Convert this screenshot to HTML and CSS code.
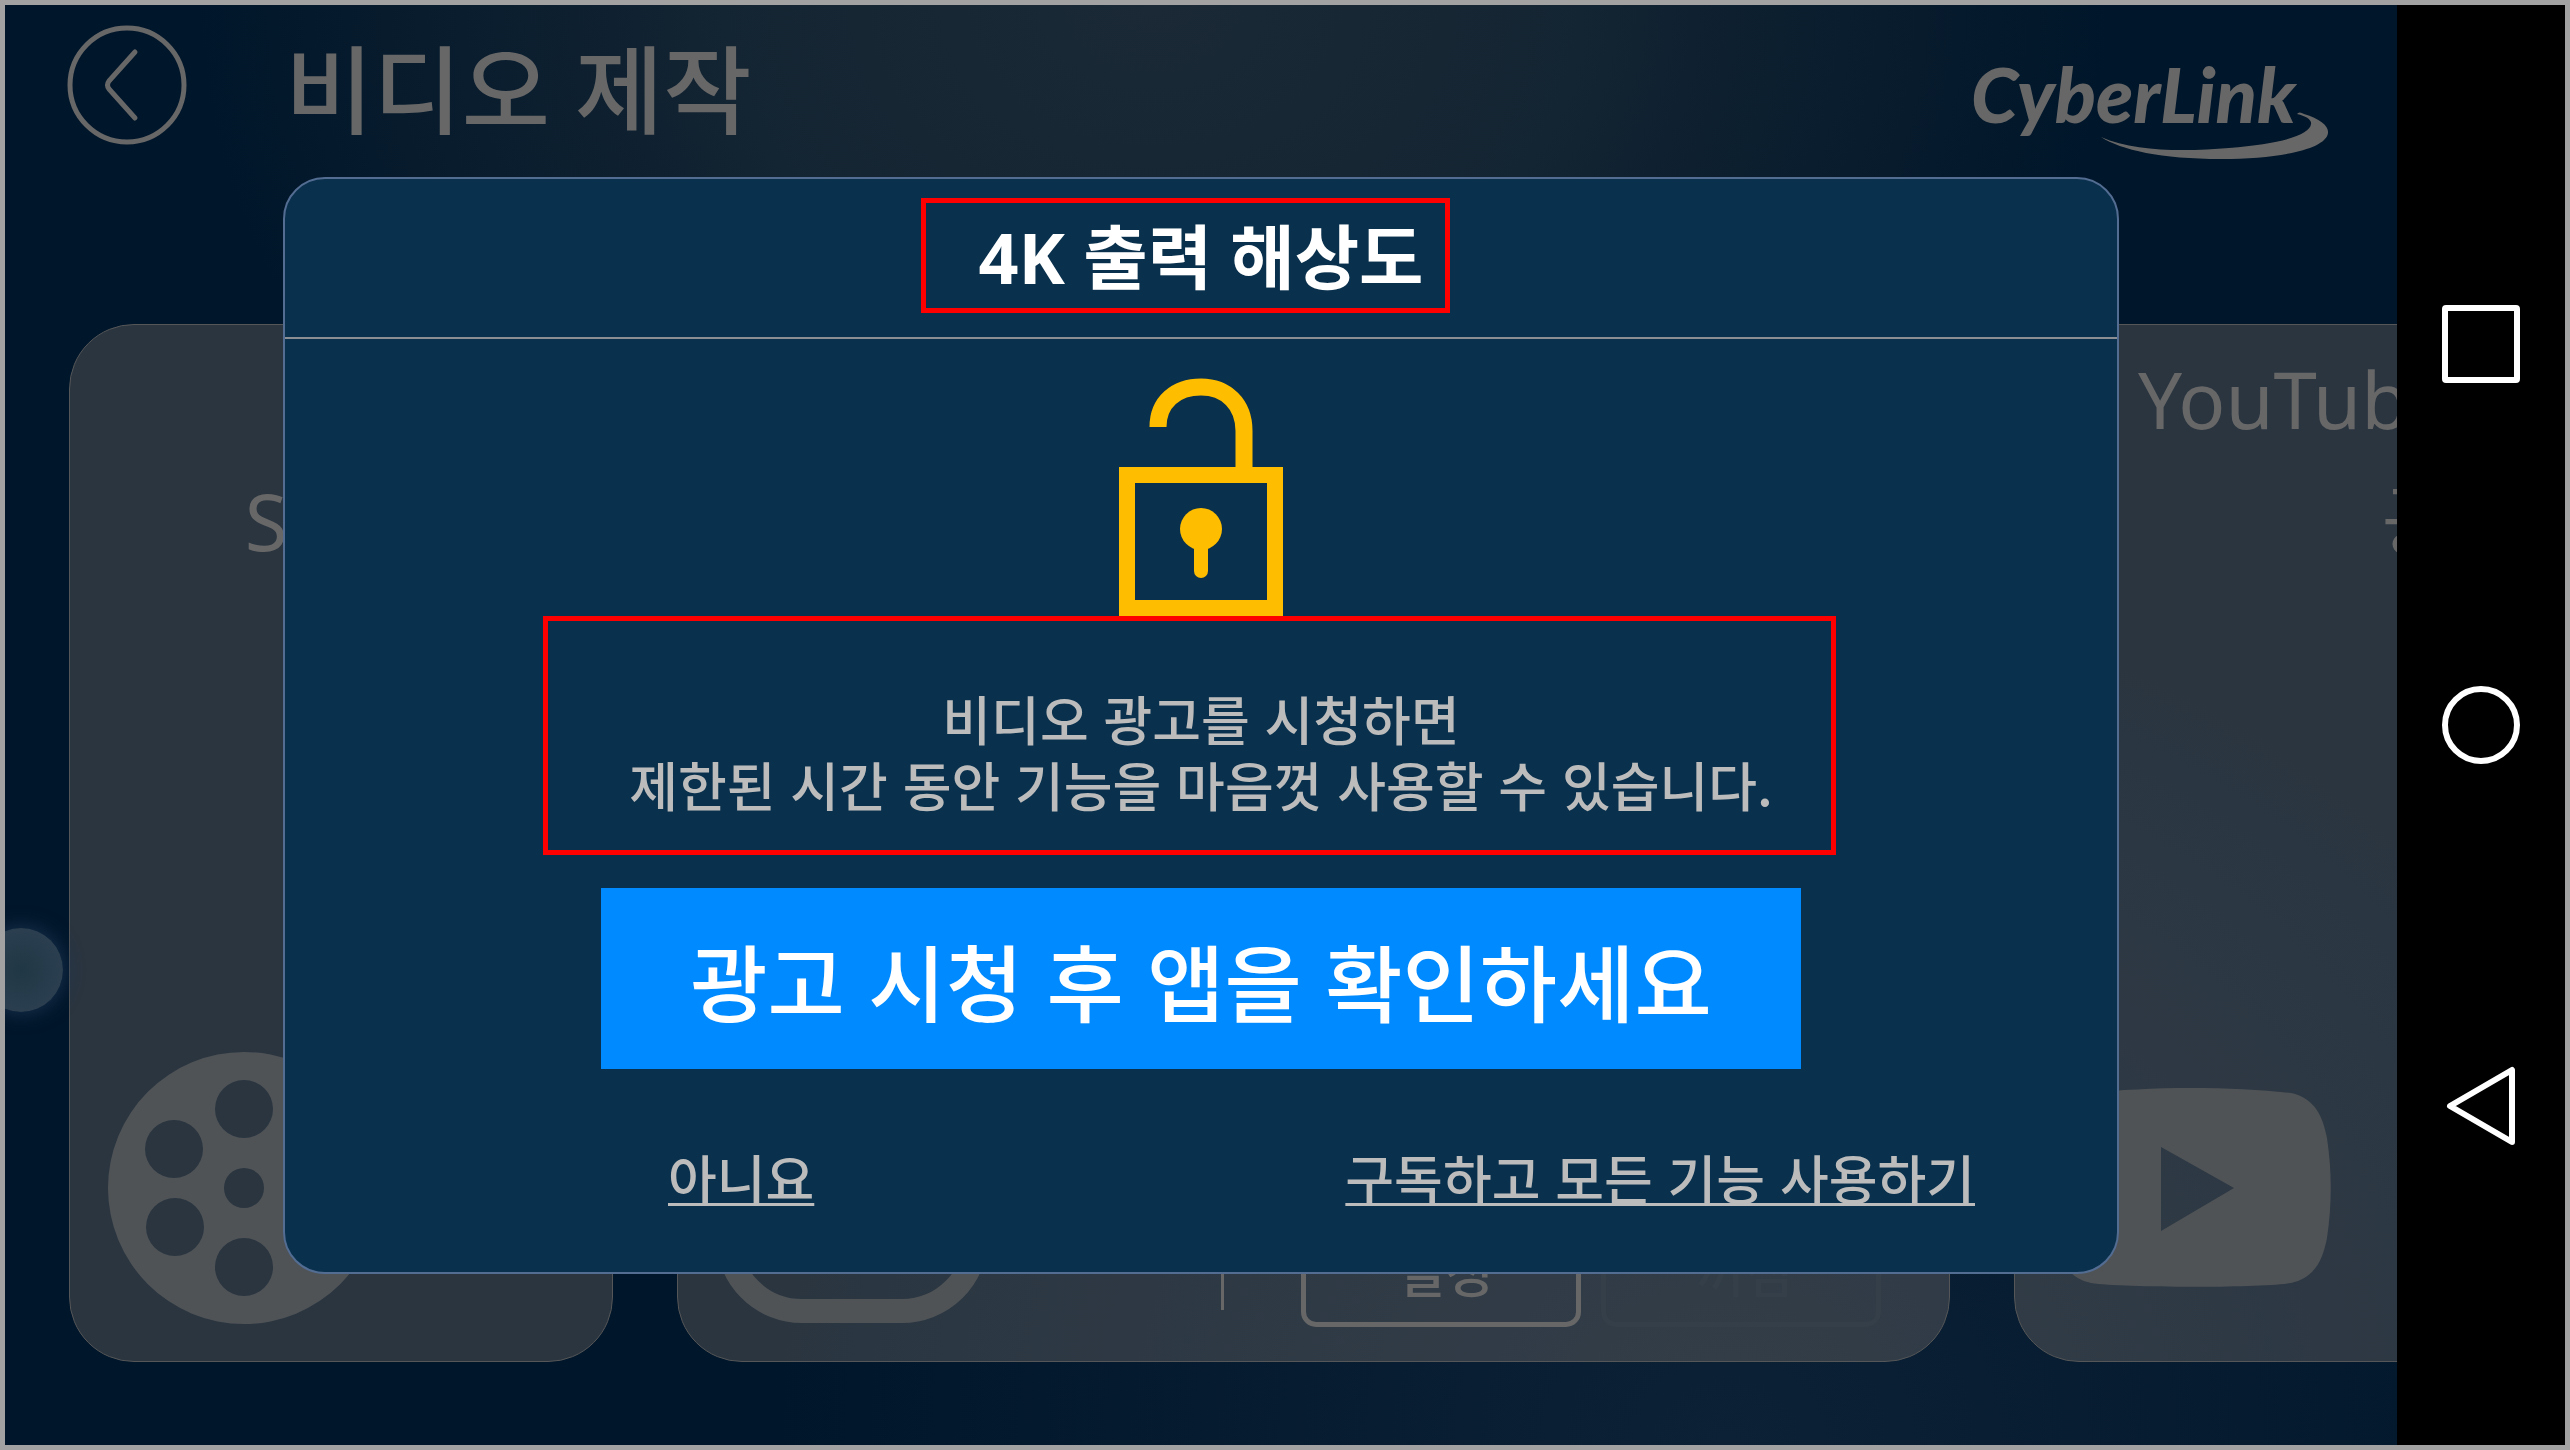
FILE: index.html
```html
<!DOCTYPE html>
<html lang="ko">
<head>
<meta charset="utf-8">
<meta name="viewport" content="width=device-width, initial-scale=1">
<title>비디오 제작</title>
<link rel="stylesheet" href="styles.css">
</head>
<body>
<div class="device">
  <main class="app">
    <header class="topbar">
      <button class="back" type="button" aria-label="뒤로">
        <svg viewBox="0 0 120 120" width="120" height="120" fill="none" stroke="currentColor" stroke-linecap="round" stroke-linejoin="round">
          <circle cx="60" cy="60" r="57" stroke-width="5"/>
          <path d="M68 27 42 56q-3 4 0 8l26 29" stroke-width="5"/>
        </svg>
      </button>
      <h1 class="page-title">비디오 제작</h1>
      <svg class="logo" viewBox="0 0 360 120" width="360" height="120" role="img" aria-label="CyberLink">
        <text class="logo-text" x="0" y="78">CyberLink</text>
        <path d="M130 92C165 108 220 106 258 103C310 99 339 90 340 79C341 75 335 71 326 69Q328 66 333 69C349 74 358 81 357 88C355 104 310 114 250 114C190 114 150 105 130 92Z" fill="currentColor"/>
      </svg>
    </header>

    <section class="cards">
      <article class="card">
        <h2 class="card-title">저장<br>SD 카드에</h2>
        <svg class="card-icon" viewBox="0 0 272 272" width="272" height="272">
          <path fill="currentColor" fill-rule="evenodd" d="M136 0a136 136 0 1 1 0 272a136 136 0 1 1 0-272ZM136 28a29 29 0 1 0 0 58a29 29 0 1 0 0-58ZM66 68a29 29 0 1 0 0 58a29 29 0 1 0 0-58ZM206 68a29 29 0 1 0 0 58a29 29 0 1 0 0-58ZM67 146a29 29 0 1 0 0 58a29 29 0 1 0 0-58ZM205 146a29 29 0 1 0 0 58a29 29 0 1 0 0-58ZM136 186a29 29 0 1 0 0 58a29 29 0 1 0 0-58ZM136 116a20 20 0 1 0 0 40a20 20 0 1 0 0-40Z"/>
        </svg>
      </article>
      <article class="card card-wide">
        <svg class="card-icon" viewBox="0 0 272 272" width="272" height="272">
          <rect x="12" y="12" width="248" height="248" rx="74" fill="none" stroke="currentColor" stroke-width="24"/>
        </svg>
        <div class="actions">
          <button class="option" type="button">설정</button>
          <button class="option option-off" type="button" disabled>꺼짐</button>
        </div>
      </article>
      <article class="card">
        <h2 class="card-title">YouTube에<br>공유</h2>
        <svg class="card-icon" viewBox="0 0 280 272" width="280" height="272">
          <path fill="currentColor" fill-rule="evenodd" d="M138 36C175 36 212 38 238 41C262 46 270 65 274 86C279 120 279 152 274 186C270 207 262 226 238 231C205 236 72 236 38 231C14 226 6 207 2 186C-3 152-3 120 2 86C6 65 14 46 38 41C64 38 101 36 138 36ZM108 95V179L181 136Z"/>
        </svg>
      </article>
    </section>

    <div class="bubble"></div>

    <div class="overlay">
      <section class="dialog" role="dialog" aria-labelledby="dialog-title">
        <header class="dialog-head">
          <h2 class="dialog-title" id="dialog-title">4K 출력 해상도</h2>
          <span class="mark mark-title"></span>
        </header>
        <svg class="lock" viewBox="0 0 164 238" width="164" height="238">
          <g fill="none" stroke="#ffbd00">
            <path d="M39 49C39 24 57 9 82 9C107 9 125 26 125 53V92" stroke-width="17"/>
            <rect x="8" y="97" width="148" height="133" stroke-width="16"/>
          </g>
          <circle cx="82" cy="151" r="21" fill="#ffbd00"/>
          <path d="M82 160V193" stroke="#ffbd00" stroke-width="14" stroke-linecap="round"/>
        </svg>
        <div class="message">
          <p class="message-text">비디오 광고를 시청하면<br>제한된 시간 동안 기능을 마음껏 사용할 수 있습니다.</p>
          <span class="mark mark-message"></span>
        </div>
        <button class="watch" type="button">광고 시청 후 앱을 확인하세요</button>
        <nav class="links">
          <a class="link" href="#no">아니요</a>
          <a class="link" href="#subscribe">구독하고 모든 기능 사용하기</a>
        </nav>
      </section>
    </div>
  </main>

  <nav class="sysbar">
    <button class="key" type="button" aria-label="최근 앱">
      <svg viewBox="0 0 80 80" width="80" height="80"><rect x="4" y="4" width="72" height="72" rx="1"/></svg>
    </button>
    <button class="key" type="button" aria-label="홈">
      <svg viewBox="0 0 80 80" width="80" height="80"><circle cx="40" cy="40" r="36"/></svg>
    </button>
    <button class="key" type="button" aria-label="이전">
      <svg viewBox="0 0 80 80" width="80" height="80"><path d="M71 4V76L9 40Z"/></svg>
    </button>
  </nav>
</div>
</body>
</html>
```
FILE: styles.css
```css
* {
  box-sizing: border-box;
}

body {
  margin: 0;
  font-family: "Noto Sans", "Noto Sans CJK KR", sans-serif;
  font-weight: 500;
  background: #000;
}

h1,
h2,
p {
  margin: 0;
  font-weight: inherit;
}

button {
  padding: 0;
  border: 0;
  background: none;
  color: inherit;
  font: inherit;
  cursor: pointer;
}

svg {
  display: block;
  flex: none;
}

.device {
  display: flex;
  min-height: 100vh;
  border: 5px solid #a2a2a2;
}

/* App screen, dimmed behind the dialog */
.app {
  position: relative;
  display: flex;
  flex: 1;
  flex-direction: column;
  min-width: 0;
  overflow: hidden;
  color: #676767;
  background:
    radial-gradient(ellipse 40% 50% at 48% 0%, #1a2935 0%, #1a2935cc 40%, transparent 100%),
    radial-gradient(ellipse 40% 60% at 72% 100%, #0c2135 0%, transparent 100%),
    #00162a;
}

.topbar {
  display: flex;
  align-items: flex-start;
  height: 319px;
  padding: 20px 66px 0 62px;
}

.back {
  width: 120px;
  height: 120px;
}

.page-title {
  margin-left: 98px;
  font-size: 96px;
  line-height: 128px;
}

.logo {
  margin: 20px 0 0 auto;
  overflow: visible;
}

.logo-text {
  fill: currentColor;
  font: italic 900 76px Lato, "Liberation Sans", sans-serif;
}

.cards {
  display: flex;
  flex: 1;
  gap: 64px;
  margin-bottom: 83px;
  padding-left: 64px;
}

.card {
  display: flex;
  flex: none;
  flex-direction: column;
  justify-content: space-between;
  width: 544px;
  padding: 13px 32px 37px 38px;
  border: 1px solid #555657;
  border-radius: 65px;
  background: rgba(175, 155, 138, 0.24);
}

.card-wide {
  flex-direction: row;
  align-items: flex-end;
  width: 1273px;
  padding: 13px 68px 34px 38px;
}

.card-wide .card-icon {
  margin-bottom: 4px;
}

.card-title {
  font-size: 78px;
  font-weight: 400;
  line-height: 122px;
  text-align: right;
}

.card-icon {
  color: #4f5356;
}

.actions {
  display: flex;
  gap: 20px;
  padding-left: 80px;
  background: linear-gradient(#676767, #676767) no-repeat 0 0 / 3px calc(100% - 17px);
}

.option {
  width: 280px;
  height: 116px;
  padding: 2px 0 0 8px;
  border: 5px solid #676767;
  border-radius: 15px;
  font-size: 53px;
}

.option-off {
  border-color: #343f49;
  color: #343f49;
}

.bubble {
  position: absolute;
  top: 923px;
  left: -26px;
  width: 84px;
  height: 84px;
  border-radius: 50%;
  background: radial-gradient(circle, #203745 0%, #2b3f50 75%);
  box-shadow: 0 0 20px #1c3555;
}

/* Dialog */
.overlay {
  position: absolute;
  inset: 0;
  display: flex;
  align-items: center;
  padding: 0 278px;
}

.dialog {
  display: flex;
  flex: 1;
  flex-direction: column;
  align-items: center;
  border: 2px solid #536c92;
  border-radius: 42px;
  background: #09304c;
  color: #bcbcbc;
  font-family: "Noto Sans CJK KR", sans-serif;
}

.dialog-head {
  position: relative;
  align-self: stretch;
  padding-bottom: 2px;
  border-bottom: 2px solid #8b8f94;
  text-align: center;
}

.dialog-title {
  color: #fff;
  font-family: "Noto Sans", "Noto Sans CJK KR", sans-serif;
  font-size: 70px;
  font-weight: 700;
  line-height: 156px;
}

.mark {
  position: absolute;
  border: 5px solid #f00;
  pointer-events: none;
}

.mark-title {
  top: 19px;
  left: calc(50% - 280px);
  width: 529px;
  height: 115px;
}

.lock {
  margin-top: 39px;
}

.message {
  position: relative;
  padding: 69px 0 71px;
  text-align: center;
}

.message-text {
  font-size: 53px;
  line-height: 66px;
}

.mark-message {
  top: 0;
  left: calc(50% - 658px);
  width: 1293px;
  height: 239px;
}

.watch {
  width: 1200px;
  max-width: 100%;
  height: 181px;
  padding-top: 3px;
  background: #008aff;
  color: #fff;
  font-size: 84px;
}

.links {
  display: flex;
  align-self: stretch;
  justify-content: space-between;
  padding: 72px 142px 59px 383px;
}

.link {
  color: inherit;
  font-size: 53px;
  line-height: 72px;
  text-decoration: underline 3px;
  text-decoration-skip-ink: none;
  text-underline-offset: 3px;
}

/* System navigation keys */
.sysbar {
  display: flex;
  flex: none;
  flex-direction: column;
  align-items: center;
  justify-content: center;
  gap: 301px;
  width: 168px;
  background: #000;
}

.key {
  width: 80px;
  height: 80px;
}

.key svg {
  fill: none;
  stroke: #fff;
  stroke-width: 6px;
  stroke-linejoin: round;
}
```
